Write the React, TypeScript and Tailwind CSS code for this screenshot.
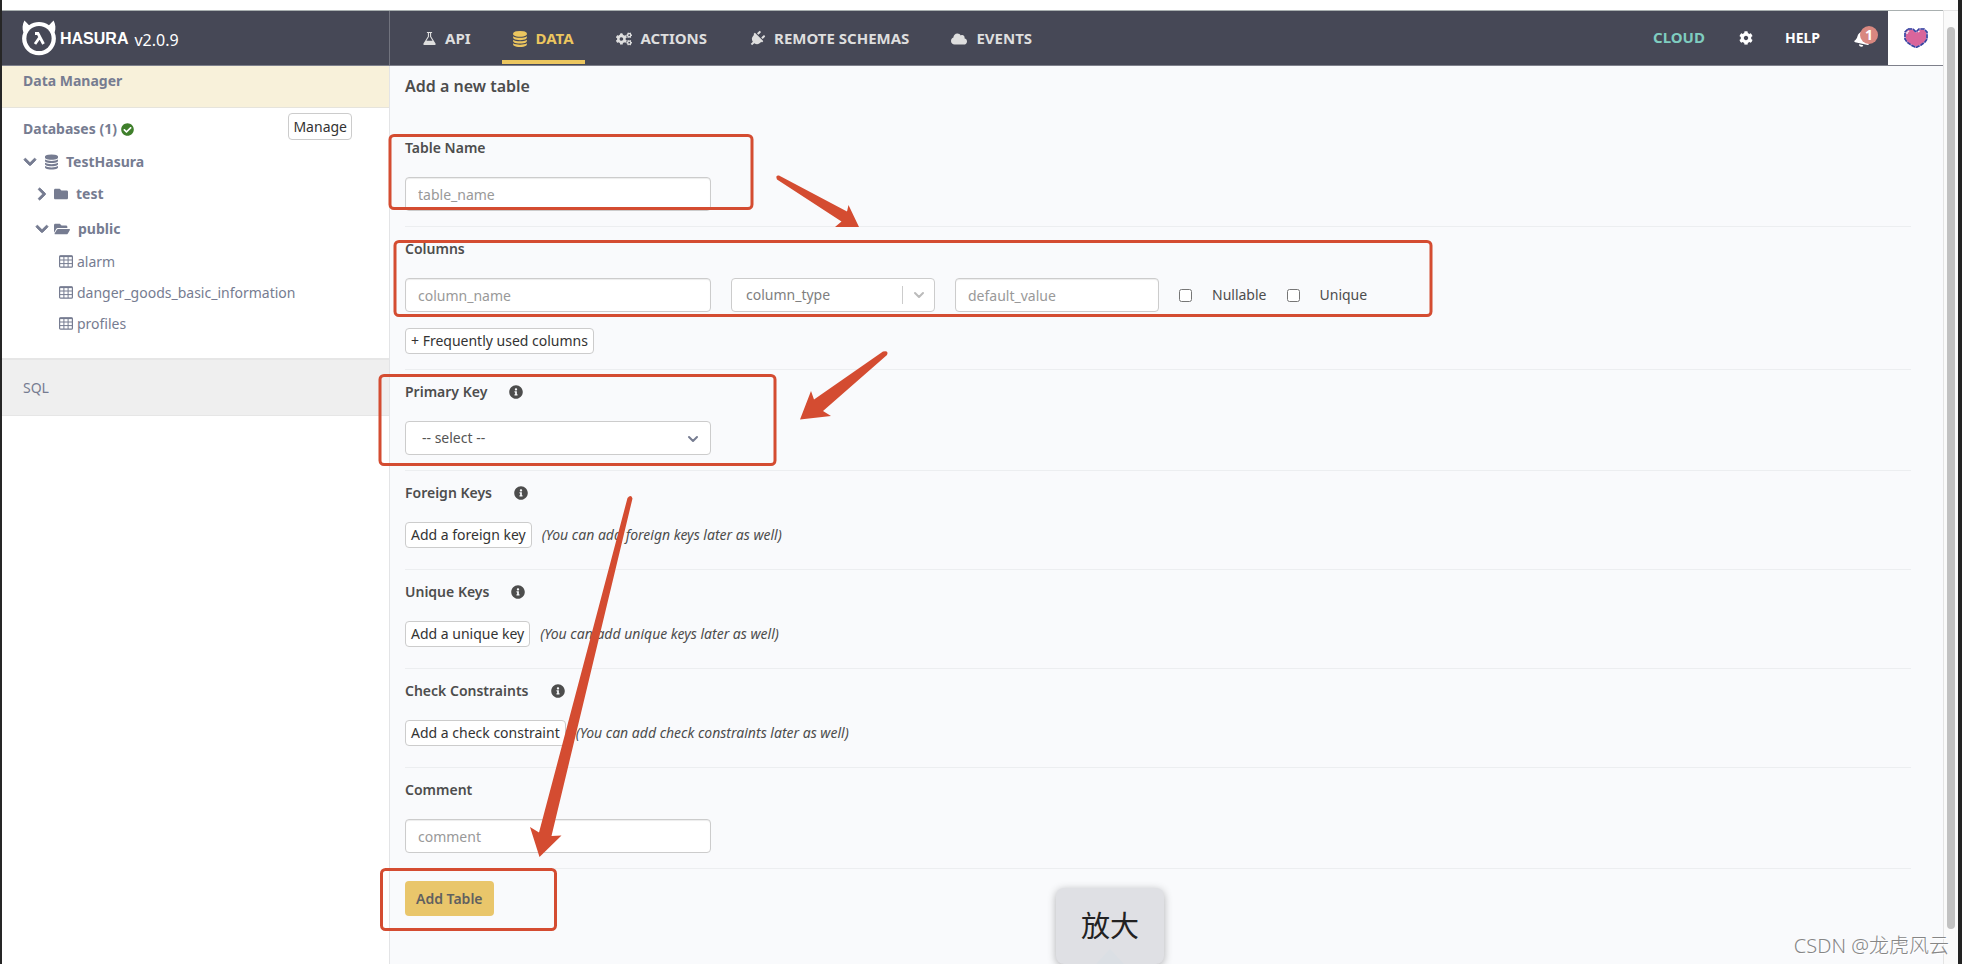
import { FC, ReactNode, useState } from "react";
import {
  FaBell,
  FaCheckCircle,
  FaChevronDown,
  FaChevronRight,
  FaCloud,
  FaCog,
  FaCogs,
  FaFolder,
  FaFolderOpen,
  FaInfoCircle,
  FaPlug,
} from "react-icons/fa";
import { FiChevronDown } from "react-icons/fi";

const DatabaseIcon: FC<{ className?: string }> = ({ className }) => (
  <svg viewBox="0 0 1536 1792" fill="currentColor" className={className} aria-hidden="true">
    <path d="M768 768q237 0 443-43t325-127v170q0 69-103 128t-280 93.5-385 34.5-385-34.5-280-93.5-103-128v-170q119 84 325 127t443 43zm0 768q237 0 443-43t325-127v170q0 69-103 128t-280 93.5-385 34.5-385-34.5-280-93.5-103-128v-170q119 84 325 127t443 43zm0-384q237 0 443-43t325-127v170q0 69-103 128t-280 93.5-385 34.5-385-34.5-280-93.5-103-128v-170q119 84 325 127t443 43zm0-1152q208 0 385 34.5t280 93.5 103 128v128q0 69-103 128t-280 93.5-385 34.5-385-34.5-280-93.5-103-128v-128q0-69 103-128t280-93.5 385-34.5z" />
  </svg>
);

const FlaskIcon: FC<{ className?: string }> = ({ className }) => (
  <svg viewBox="128 128 1536 1536" fill="currentColor" className={className} aria-hidden="true">
    <path d="M1591 1448q56 89 21.5 152.5t-140.5 63.5h-1152q-106 0-140.5-63.5t21.5-152.5l503-793v-399h-64q-26 0-45-19t-19-45 19-45 45-19h512q26 0 45 19t19 45-19 45-45 19h-64v399zm-779-725l-272 429h712l-272-429-20-31v-436h-128v436z" />
  </svg>
);

const TableIcon: FC<{ className?: string }> = ({ className }) => (
  <svg viewBox="0 0 14 13" fill="none" stroke="currentColor" className={className} aria-hidden="true">
    <rect x="0.6" y="0.8" width="12.8" height="11.4" rx="1" strokeWidth="1.2" />
    <path d="M0.6 1.3h12.8" strokeWidth="1.6" />
    <path d="M4.9 1v11M9.1 1v11M1 5h12M1 8.6h12" strokeWidth="1" />
  </svg>
);

const HasuraLogo: FC = () => (
  <svg viewBox="0 0 34 36" className="h-9 w-[34px]" aria-hidden="true">
    <path
      d="M2.4 0.5C3.9 2 5.4 3.5 7 5.2C10 3 13.500 2.100 17 2.100S24 3 27 5.200C28.600 3.500 30.100 2 31.600 0.500C33.600 4.500 34 8.500 32.600 12.500C33.500 14.500 33.900 16.500 33.900 18.500A16.900 16.800 0 0 1 0.100 18.500C0.100 16.500 0.500 14.500 1.400 12.500C0 8.500 0.400 4.500 2.400 0.500Z"
      fill="#fff"
    />
    <circle cx="17" cy="18.500" r="12.600" fill="#464856" />
    <path d="M13 13.500h3l5.500 10.500M17.400 17.800l-4.400 6.200" fill="none" stroke="#fff" strokeWidth="2.800" />
  </svg>
);

const PixelHeart: FC = () => (
  <svg viewBox="0 0 24 20" className="h-5 w-6" aria-hidden="true">
    <path
      d="M4 1H9L12 4L15 1H20L23 4V11L21 14L17 17L12 19.500L7 17L3 14L1 11V4Z"
      fill="#d9659b"
      stroke="#b9a9dc"
      strokeWidth="1.5"
    />
    <path
      d="M4 1H9L12 4L15 1H20L23 4V11L21 14L17 17L12 19.500L7 17L3 14L1 11V4Z"
      fill="none"
      stroke="#3544a0"
      strokeWidth="1.6"
      strokeDasharray="4 1"
    />
    <path d="M3 6V4.500L5 3M14 4L15.500 3" fill="none" stroke="#f4e4f0" strokeWidth="1.500" />
  </svg>
);

const NavItem: FC<{ label: string; icon: ReactNode; active?: boolean }> = ({ label, icon, active }) => (
  <a
    href="#"
    className={
      active
        ? "flex h-[53px] items-center gap-[9px] border-y-4 border-t-transparent border-b-[#ecc65f] px-[11px] pt-0.5 text-[#ecc65f]"
        : "flex h-[53px] items-center gap-[9px] border-y-4 border-transparent px-[11px] pt-0.5 text-[#dedede]"
    }
  >
    {icon}
    {label}
  </a>
);

const Header: FC = () => (
  <header className="flex h-14 shrink-0 border-t border-b border-t-[#a9b0b0] border-b-[#7e808b] bg-[#464856] text-[15px] font-bold">
    <div className="flex w-[388px] shrink-0 items-center border-r border-[#71737e] pl-5 text-white">
      <a href="#" className="flex items-center gap-1">
        <HasuraLogo />
        <span className="pt-0.5 font-['Liberation_Sans_Narrow','Liberation_Sans',sans-serif] text-base">HASURA</span>
      </a>
      <span className="pl-1.5 pt-1 text-base font-normal">v2.0.9</span>
    </div>
    <nav className="flex gap-5 pl-[22px]">
      <NavItem label="API" icon={<FlaskIcon className="size-[13px]" />} />
      <NavItem label="DATA" active icon={<DatabaseIcon className="h-4 w-[14px]" />} />
      <NavItem label="ACTIONS" icon={<FaCogs className="size-4" />} />
      <NavItem label="REMOTE SCHEMAS" icon={<FaPlug className="size-4 rotate-45" />} />
      <NavItem label="EVENTS" icon={<FaCloud className="size-4" />} />
    </nav>
    <div className="ml-auto flex items-center text-sm text-white">
      <a href="#" className="text-[15px] text-[#7fcdc0]">CLOUD</a>
      <button type="button" aria-label="Settings" className="ml-[34px]">
        <FaCog className="size-[14px]" />
      </button>
      <a href="#" className="ml-8">HELP</a>
      <button type="button" aria-label="Notifications" className="relative ml-[34px] mr-[17px]">
        <FaBell className="size-[17px] rotate-12" />
        <span className="absolute -top-1 left-1.5 flex size-[18px] items-center justify-center rounded-full bg-[#d98880] text-sm">
          1
        </span>
      </button>
      <button type="button" aria-label="Love" className="flex h-full w-[55px] items-center justify-center bg-white">
        <PixelHeart />
      </button>
    </div>
  </header>
);

const tables = ["alarm", "danger_goods_basic_information", "profiles"];

const Sidebar: FC = () => (
  <aside className="w-[388px] shrink-0 border-r border-[#e3e4e6] bg-white text-sm text-[#767c91]">
    <div className="h-[42px] border-b border-[#e6e4dc] bg-[#f8f1da] pl-[21px] pt-[5px] font-bold">
      <a href="#">Data Manager</a>
    </div>
    <div className="h-[250px] pl-[21px] pt-[5px]">
      <div className="flex justify-between pr-[37px] font-bold">
        <div className="flex items-center gap-1 pt-[5px]">
          Databases (1)
          <FaCheckCircle className="size-[13px] text-[#3f7f2b]" />
        </div>
        <button
          type="button"
          className="h-[27px] rounded-sm border border-[#ccc] bg-white px-1 text-sm font-normal text-[#333]"
        >
          Manage
        </button>
      </div>
      <ul className="font-bold">
        <li className="flex h-8 items-center pt-3">
          <FaChevronDown className="mr-2 size-[14px]" stroke="currentColor" strokeWidth={36} />
          <DatabaseIcon className="mr-2 h-4 w-[13px]" />
          TestHasura
        </li>
        <li className="flex h-8 items-center pl-3 pt-3">
          <FaChevronRight className="mr-[5px] size-[14px]" stroke="currentColor" strokeWidth={36} />
          <FaFolder className="mr-2 size-[14px]" />
          test
        </li>
        <li className="flex h-[35px] items-center pl-3 pt-[15px]">
          <FaChevronDown className="mr-[5px] size-[14px]" stroke="currentColor" strokeWidth={36} />
          <FaFolderOpen className="mr-2 size-4" />
          public
        </li>
      </ul>
      <ul className="pl-9 pt-[7px]">
        {tables.map((table) => (
          <li key={table} className="flex h-[31px] items-center">
            <a href="#" className="flex items-center gap-1">
              <TableIcon className="h-[13px] w-[14px]" />
              {table}
            </a>
          </li>
        ))}
      </ul>
    </div>
    <div className="flex h-[58px] items-center border-b border-t-2 border-[#e6e6e6] bg-[#efefef] pl-[21px]">
      <a href="#">SQL</a>
    </div>
  </aside>
);

const SmallButton: FC<{ children: ReactNode }> = ({ children }) => (
  <button
    type="button"
    className="h-[26px] rounded-sm border border-[#ccc] bg-white px-[5px] text-sm text-[#333]"
  >
    {children}
  </button>
);

const SectionTitle: FC<{ title: string; info?: boolean }> = ({ title, info }) => (
  <h4 className="mb-[19px] flex h-5 items-center gap-[22px] font-semibold">
    {title}
    {info && <FaInfoCircle className="size-[14px]" />}
  </h4>
);

const KeySection: FC<{ title: string; button: string; hint: string }> = ({ title, button, hint }) => (
  <section className="border-t border-[#eceef0] pb-[21px] pt-3">
    <SectionTitle title={title} info />
    <div className="flex items-center gap-2.5">
      <SmallButton>{button}</SmallButton>
      <i>{hint}</i>
    </div>
  </section>
);

const AddTableForm: FC = () => {
  const [tableName, setTableName] = useState("");
  const [columnName, setColumnName] = useState("");
  const [defaultValue, setDefaultValue] = useState("");
  const [comment, setComment] = useState("");

  return (
    <main className="min-w-0 grow bg-[#f9fafc] pl-[15px] pr-8 text-sm text-[#4d4d4d]">
      <form onSubmit={(e) => e.preventDefault()}>
        <h2 className="pb-8 pt-2 text-base font-semibold">Add a new table</h2>

        <section className="pb-[15px] pt-2">
          <SectionTitle title="Table Name" />
          <input
            type="text"
            aria-label="Table Name"
            placeholder="table_name"
            value={tableName}
            onChange={(e) => setTableName(e.target.value)}
            className="block h-[34px] w-[306px] rounded border border-[#ccc] bg-white px-3 shadow-[inset_0_1px_1px_rgba(0,0,0,0.075)] placeholder:text-[#999]"
          />
        </section>

        <section className="border-t border-[#eceef0] pb-[15px] pt-3">
          <SectionTitle title="Columns" />
          <div className="flex items-center">
            <input
              type="text"
              aria-label="Column name"
              placeholder="column_name"
              value={columnName}
              onChange={(e) => setColumnName(e.target.value)}
              className="h-[34px] w-[306px] rounded border border-[#ccc] bg-white px-3 shadow-[inset_0_1px_1px_rgba(0,0,0,0.075)] placeholder:text-[#999]"
            />
            <div className="relative ml-5">
              <select
                aria-label="Column type"
                className="block h-[34px] w-[204px] appearance-none rounded border border-[#ccc] bg-white px-[14px] text-[#808080]"
              >
                <option>column_type</option>
              </select>
              <div className="pointer-events-none absolute inset-y-2 right-2 flex items-center border-l border-[#ccc] pl-2 text-[#bbb]">
                <FiChevronDown className="size-4" strokeWidth={3} />
              </div>
            </div>
            <input
              type="text"
              aria-label="Default value"
              placeholder="default_value"
              value={defaultValue}
              onChange={(e) => setDefaultValue(e.target.value)}
              className="ml-5 h-[34px] w-[204px] rounded border border-[#ccc] bg-white px-3 shadow-[inset_0_1px_1px_rgba(0,0,0,0.075)] placeholder:text-[#999]"
            />
            <input id="nullable" type="checkbox" className="ml-5 size-[13px]" />
            <label htmlFor="nullable" className="ml-5">Nullable</label>
            <input id="unique" type="checkbox" className="ml-5 size-[13px]" />
            <label htmlFor="unique" className="ml-5">Unique</label>
          </div>
          <div className="mt-4 flex">
            <SmallButton>+ Frequently used columns</SmallButton>
          </div>
        </section>

        <section className="border-t border-[#eceef0] pb-[15px] pt-3">
          <SectionTitle title="Primary Key" info />
          <div className="relative w-[306px]">
            <select
              aria-label="Primary Key"
              className="block h-[34px] w-full appearance-none rounded border border-[#ccc] bg-white px-4 text-[#555]"
            >
              <option>-- select --</option>
            </select>
            <FiChevronDown className="pointer-events-none absolute right-2.5 top-2.5 size-4 text-[#767c91]" strokeWidth={3} />
          </div>
        </section>

        <KeySection title="Foreign Keys" button="Add a foreign key" hint="(You can add foreign keys later as well)" />
        <KeySection title="Unique Keys" button="Add a unique key" hint="(You can add unique keys later as well)" />
        <KeySection
          title="Check Constraints"
          button="Add a check constraint"
          hint="(You can add check constraints later as well)"
        />

        <section className="border-t border-[#eceef0] pb-[15px] pt-3">
          <SectionTitle title="Comment" />
          <input
            type="text"
            aria-label="Comment"
            placeholder="comment"
            value={comment}
            onChange={(e) => setComment(e.target.value)}
            className="block h-[34px] w-[306px] rounded border border-[#ccc] bg-white px-3 shadow-[inset_0_1px_1px_rgba(0,0,0,0.075)] placeholder:text-[#999]"
          />
        </section>

        <div className="border-t border-[#eceef0] pt-3">
          <button type="submit" className="h-[35px] rounded-sm bg-[#e9c66b] px-[11px] font-semibold text-[#606060]">
            Add Table
          </button>
        </div>
      </form>
    </main>
  );
};

// red boxes and arrows that mark the steps
const Annotations: FC = () => (
  <svg
    viewBox="0 0 1962 964"
    width="1962"
    height="964"
    className="pointer-events-none absolute left-0 top-0 max-w-none"
    aria-hidden="true"
  >
    <g fill="none" stroke="#d44c31" strokeWidth="3">
      <rect x="390" y="135.500" width="362" height="73" rx="4" />
      <rect x="395" y="241.500" width="1036" height="74" rx="4" />
      <rect x="380" y="375.500" width="395" height="89" rx="4" />
      <rect x="381.500" y="869.500" width="174" height="60" rx="4" />
    </g>
    <g fill="#d44c31">
      <path d="M779 175.500L847 211.500L848.500 205L859 227H835L841.500 221.500L777 179.500Q775 175 779 175.500Z" />
      <path d="M883 351.500L814 399.500L811 391L800 419.500L831 416L823 411L887 355Q889 350 883 351.500Z" />
      <path d="M627.500 498L539 832.500L530 827L539.500 857L561.500 835.500L551.500 836L632.500 498.500Q631 494 627.500 498Z" />
    </g>
  </svg>
);

const App: FC = () => (
  <div className="relative flex h-screen overflow-hidden bg-white font-['Noto_Sans','Noto_Sans_CJK_SC',sans-serif]">
    <div className="w-0.5 shrink-0 bg-[#262626]" />
    <div className="flex min-w-0 grow pt-[10px]">
      <div className="flex min-w-0 grow flex-col">
        <Header />
        <div className="flex min-h-0 grow">
          <Sidebar />
          <AddTableForm />
        </div>
      </div>
      <div className="w-[15px] shrink-0 border-l border-t border-[#e4e4e4] bg-[#fafafa] pl-[3px] pt-4">
        <div className="h-[902px] w-2 rounded-full bg-[#c1c1c1]" />
      </div>
    </div>
    <div className="w-1 shrink-0 bg-[#222]" />

    <Annotations />

    <div
      role="tooltip"
      className="absolute bottom-0 left-[1056px] flex h-[76px] w-[108px] items-center justify-center rounded-lg bg-[#dfe0e4] text-[29px] text-[#222] shadow-[0_2px_8px_rgba(0,0,0,0.3)]"
    >
      放大
      <svg viewBox="0 0 28 16" className="absolute bottom-0 h-4 w-7" aria-hidden="true">
        <path d="M0 16L14 1L28 16Z" fill="#dbdfe4" />
      </svg>
    </div>
    <p className="absolute bottom-1 right-[13px] text-xl font-light text-[#868686] [text-shadow:1px_1px_0_#fff]">CSDN @龙虎风云</p>
  </div>
);

export default App;
